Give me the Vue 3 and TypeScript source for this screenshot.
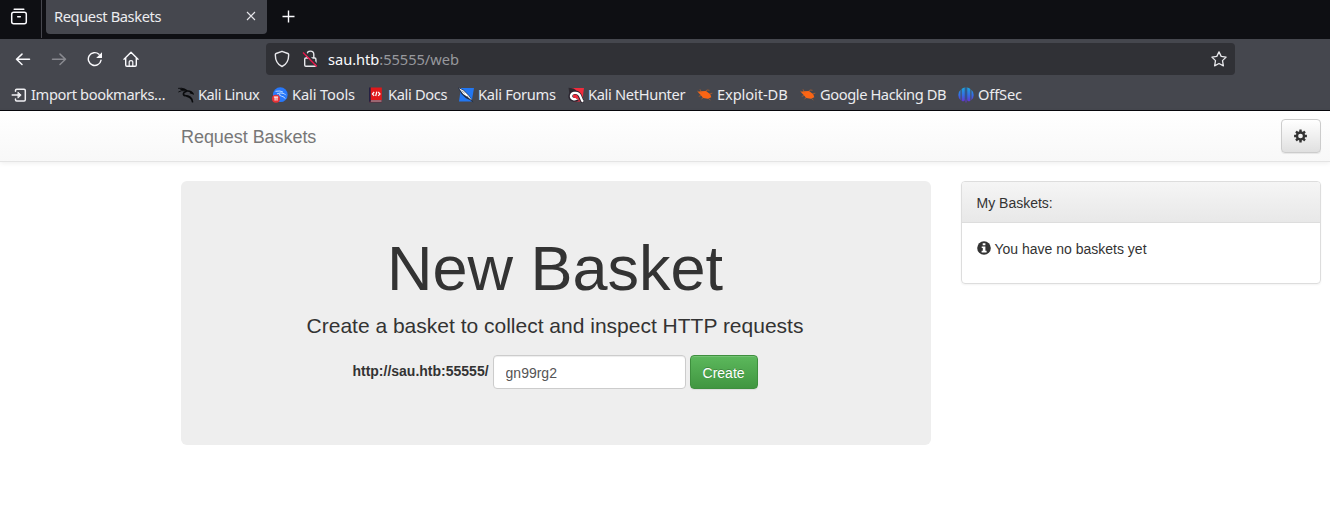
<script setup lang="ts">
import { ref } from 'vue'

interface Bookmark {
  icon: string
  label: string
  tracking: number
}

const bookmarks: Bookmark[] = [
  { icon: 'import', label: 'Import bookmarks…', tracking: -0.38 },
  { icon: 'kali', label: 'Kali Linux', tracking: -0.46 },
  { icon: 'tools', label: 'Kali Tools', tracking: -0.14 },
  { icon: 'docs', label: 'Kali Docs', tracking: -0.35 },
  { icon: 'forums', label: 'Kali Forums', tracking: -0.3 },
  { icon: 'nethunter', label: 'Kali NetHunter', tracking: -0.34 },
  { icon: 'bug', label: 'Exploit-DB', tracking: -0.1 },
  { icon: 'bug', label: 'Google Hacking DB', tracking: -0.41 },
  { icon: 'offsec', label: 'OffSec', tracking: -0.15 },
]

const basketName = ref<string>('gn99rg2')
const teeth: number[] = [0, 45, 90, 135, 180, 225, 270, 315]
</script>

<template>
  <div class="window">
    <div class="tabstrip">
      <div class="view">
        <svg width="18" height="18" viewBox="0 0 18 18" fill="none" stroke="#fbfbfe" stroke-width="1.5" stroke-linecap="round">
          <path d="M4.200 1.200h9.600" />
          <rect x="1.700" y="4.200" width="14.600" height="11.600" rx="2" />
          <path d="M7.700 8.800h2.600" />
        </svg>
      </div>
      <div class="tab">
        <span class="tab-title">Request Baskets</span>
        <svg class="close" width="10" height="10" viewBox="0 0 10 10" stroke="#e6e6ea" stroke-width="1.1"><path d="M1 1l8 8M9 1L1 9" /></svg>
      </div>
      <svg class="plus" width="14" height="14" viewBox="0 0 14 14" stroke="#fbfbfe" stroke-width="1.4"><path d="M6.500 .5v12M.5 6.500h12" /></svg>
    </div>

    <div class="toolbar">
      <div class="nav-buttons">
        <svg width="16" height="16" viewBox="0 0 16 16" fill="none" stroke="#fbfbfe" stroke-width="1.5" stroke-linecap="round" stroke-linejoin="round"><path d="M14.500 8.300H1.500M7 3.100L1.500 8.300 7 13.500" /></svg>
        <svg width="16" height="16" viewBox="0 0 16 16" fill="none" stroke="#898a90" stroke-width="1.500" stroke-linecap="round" stroke-linejoin="round"><path d="M1.500 8.300h13M9 3.100l5.500 5.200L9 13.500" /></svg>
        <svg width="16" height="16" viewBox="0 0 16 16" fill="none" stroke="#fbfbfe" stroke-width="1.400" stroke-linecap="round"><path d="M14 9.300A6.400 6.400 0 1 1 12 3.300" /><path d="M15 1.200v5.300q0 .5-.5.500H9.200z" fill="#fbfbfe" stroke="none" /></svg>
        <svg class="home" width="16" height="16" viewBox="0 0 16 16" fill="none" stroke="#fbfbfe" stroke-width="1.400" stroke-linejoin="round" stroke-linecap="round"><path d="M1 8.200l7-6.900 7 6.900M2.700 6.800v7.300q0 1.200 1.200 1.200h8.200q1.200 0 1.200-1.200V6.800" /><path d="M6.200 15v-4.200q0-1.100 1.800-1.100t1.800 1.100V15" stroke-width="1.200" /></svg>
      </div>
      <div class="urlbar">
        <svg class="shield" width="16" height="18" viewBox="0 0 16 18" fill="none" stroke="#e8e8ec" stroke-width="1.400" stroke-linejoin="round"><path d="M8 1.300l5.900 2.200q.8.300.8 1.200c0 5.600-2.200 9.700-6.700 11.800C3.500 14.400 1.300 10.300 1.300 4.700q0-.9.8-1.200z" /></svg>
        <svg class="lock" width="16" height="18" viewBox="0 0 16 18" fill="none" stroke="#e8e8ec" stroke-width="1.400"><path d="M5 8V4.500a3.400 3.400 0 0 1 6.800 0V8" /><rect x="2.700" y="8" width="11.200" height="8.200" rx="1.200" /><path d="M2.200 1.500l13.800 14" stroke="#303136" stroke-width="1.800" /><path d="M1 2.500l13.800 14" stroke="#e8164a" stroke-width="1.400" /></svg>
        <span class="url">sau.htb<span class="dim">:55555/web</span></span>
        <svg class="star" width="16" height="16" viewBox="0 0 16 16" fill="none" stroke="#e8e8ec" stroke-width="1.300" stroke-linejoin="round"><path d="M8 .9l2.200 4.500 4.900.7-3.600 3.500.9 5.200L8 12.500l-4.400 2.300.9-5.200L.9 6.100l4.900-.7z" /></svg>
      </div>
    </div>

    <div class="bookmarks">
      <div v-for="b in bookmarks" :key="b.label" class="bookmark">
        <svg width="16" height="16" viewBox="0 0 16 16">
          <g v-if="b.icon === 'import'" fill="none" stroke="#f0f0f3" stroke-width="1.500" stroke-linecap="round" stroke-linejoin="round">
            <path d="M4.500 4.300V3.500q0-1.200 1.200-1.200h7.400q1.200 0 1.200 1.200v9.200q0 1.200-1.200 1.200H5.700q-1.200 0-1.200-1.200v-.8M1.200 8.100H9" />
            <path d="M7.200 5.300l3 2.800-3 2.800z" fill="#f0f0f3" stroke-width=".8" />
          </g>
          <g v-else-if="b.icon === 'kali'" fill="none" stroke="#090a0c" stroke-linecap="round">
            <path d="M.5 1.300q3.500-.6 6.500.8M.7 4.800q3-2 6.300-1" stroke-width=".9" />
            <path d="M3 2.300q5 .2 6.200 1.700 4-.3 5.500 2.500l-2.200-.7M8 4.500C4 6 5 8.800 8.500 8.800c4 0 5.200 2.200 6 6" stroke-width="1.600" />
            <path d="M9 9.200q3 .8 4.500 2.800" stroke-width="1.600" />
          </g>
          <g v-else-if="b.icon === 'tools'">
            <circle cx="8.300" cy="7.700" r="7.400" fill="#2878fa" />
            <path d="M3.500 4.300q5-1 7.500.8M5 6.800q3-1.700 7.200-.2l1.500 1.600M8 6.500q-1.800 2 1.500 2.700 3 .5 3.700 2.500" fill="none" stroke="#b9d9ff" stroke-width="1" />
            <circle cx="4" cy="11.700" r="4" fill="#e83235" />
            <path d="M1.900 10h4.200M3.100 10v3.600M5 10v3.600" stroke="#fff" stroke-width="1" />
          </g>
          <g v-else-if="b.icon === 'docs'">
            <path d="M1 .5h2v13L1 15.500z" fill="#252143" />
            <path d="M2.700 .5h11.100v12.500H2.700z" fill="#e0181a" />
            <path d="M1 15.500l2-2.500h10.800v2.500z" fill="#62283b" />
            <path d="M3 14h10.500" stroke="#d7a3a8" stroke-width="1" />
            <path d="M6.200 5L4.400 7l1.800 1.800M10.200 5L12 7l-1.800 1.800M8.800 4.700L7.700 9" fill="none" stroke="#fff" stroke-width="1.200" />
          </g>
          <g v-else-if="b.icon === 'forums'">
            <path d="M3 1h13l-2.300 13.600H1z" fill="#2277f2" />
            <path d="M0 .5l5.500 2.200L11.200 8.500 15.500 15.500 12 13 8 11.200 3.500 7z" fill="#1b2b48" />
            <path d="M1 1.200l4.500 2.200 5 5.100 3.500 5-4-3.200L5.200 7z" fill="#fff" />
            <path d="M3.700 3.700l3 2.500M9 9l1.500 1" fill="none" stroke="#5d6c80" stroke-width=".7" />
          </g>
          <g v-else-if="b.icon === 'nethunter'">
            <path d="M3.500 1H16l-1.800 13.500H6z" fill="#f02b3c" />
            <path d="M.5.700l5 .8 3 2-7 3.700z" fill="#2d2930" />
            <path d="M15.500 15.300C12.800 13.700 13 9.500 11 7.300 8.500 4.400 3 5.200 2.400 8.900c-.4 3.500 4.100 5 7.300 3" fill="none" stroke="#2b2530" stroke-width="4" />
            <path d="M15 14.800C12.500 12 13.200 9 10.700 7 8 4.800 3.500 5.800 3 8.900c-.3 2.700 3.200 4.300 6.300 2.700" fill="none" stroke="#fff" stroke-width="2.300" />
            <path d="M9.300 11.600L6 8.600" stroke="#ef2a3b" stroke-width="1.500" />
          </g>
          <g v-else-if="b.icon === 'bug'" stroke="#d9641f" stroke-width=".6" fill="none">
            <path d="M1 5.200L4 4.300l5-.4 4.300 3.300 1 3.100-3.500 1.400-4.600-.8L3 7.200z" fill="#fb6514" stroke="none" />
            <path d="M.3 4.200l5 1.500M4.300 5L3 2.300M8.500 4.200l1.500-1.200 2.500.3M12.300 7l3-.8M11.300 11l2 2.200M6.500 10l-2 2.300M4 8.500L1.800 9.400" />
          </g>
          <g v-else>
            <defs><linearGradient id="offsecFill" gradientUnits="userSpaceOnUse" x1="0" y1="0" x2="0" y2="16"><stop offset="0" stop-color="#1aa8dc" /><stop offset=".5" stop-color="#346ee5" /><stop offset="1" stop-color="#6a28cf" /></linearGradient></defs>
            <path d="M2.600 2.800v10.400Q.3 11.200.3 8t2.300-5.200zM3.600 2Q5 .9 6.800.6v12.200q0 1-.7 1.400Q4.700 14.500 3.600 13.700zM9.200.6q1.800.3 3.200 1.400v11.700q-1.100.8-2.500.5-.7-.4-.7-1.400zM13.400 2.800Q15.700 4.800 15.700 8t-2.300 5.200zM7.500.5h1v15h-1z" fill="url(#offsecFill)" />
            <path d="M7.500.5h1v12h-1z" fill="#2b4a86" />
          </g>
        </svg>
        <span class="label" :style="{ letterSpacing: `${b.tracking}px` }">{{ b.label }}</span>
      </div>
    </div>

    <header class="navbar">
      <span class="brand">Request Baskets</span>
      <button class="btn gear" type="button">
        <svg width="14" height="14" viewBox="0 0 14 14">
          <g fill="#333"><rect v-for="a in teeth" :key="a" x="5.700" y=".1" width="2.600" height="3.500" rx=".3" :transform="`rotate(${a} 7 7)`" /></g>
          <circle cx="7" cy="7" r="3.800" fill="none" stroke="#333" stroke-width="2.500" />
        </svg>
      </button>
    </header>

    <main class="content">
      <section class="jumbotron">
        <h1>New Basket</h1>
        <p>Create a basket to collect and inspect HTTP requests</p>
        <form class="create" @submit.prevent>
          <label for="basket">http://sau.htb:55555/</label>
          <input id="basket" v-model="basketName" type="text" />
          <button class="btn success" type="submit">Create</button>
        </form>
      </section>
      <aside class="panel">
        <div class="panel-heading">My Baskets:</div>
        <div class="panel-body">
          <svg width="14" height="14" viewBox="0 0 14 14"><circle cx="7" cy="7" r="6.800" fill="#333" /><path d="M5.700 2.300h2.700v2H5.700zM4.700 5.500h3.700v4.300h1.200v1.700H4.600V9.800h1.200V7.100H4.700z" fill="#fff" /></svg>
          <span>You have no baskets yet</span>
        </div>
      </aside>
    </main>
  </div>
</template>

<style>
body { margin: 0; background: #fff; }
</style>

<style scoped>
* { box-sizing: border-box; }
.window { height: 525px; overflow: hidden; background: #fff; font-family: "Liberation Sans", Arial, sans-serif; font-size: 14px; color: #333; }
.tabstrip, .toolbar, .bookmarks { font-family: "Noto Sans", sans-serif; color: #ececef; }
.tabstrip { height: 39px; background: #0e0f13; display: flex; align-items: flex-start; }
.view { width: 42px; height: 38px; padding: 8px 0 0 10px; border-right: 1px solid #46474e; }
.tab { width: 221px; height: 34px; margin-left: 4px; padding: 0 11px 2px 8px; background: #45474e; border-radius: 0 0 4px 4px; display: flex; align-items: center; justify-content: space-between; }
.tab-title { font-size: 14.67px; line-height: 32px; letter-spacing: -.4px; }
.plus { margin: 10px 0 0 15px; }
.toolbar { height: 40px; background: #45474e; display: flex; padding-top: 4px; }
.nav-buttons { width: 266px; padding: 8px 0 0 15px; display: flex; gap: 20px; }
.home { margin-left: -.5px; }
.urlbar { width: 969px; height: 32px; background: #303136; border-radius: 4px; display: flex; align-items: center; padding: 0 8px; }
.lock { margin-left: 12px; }
.url { flex: 1; margin-left: 10px; font-size: 14.67px; line-height: 32px; color: #fbfbfe; letter-spacing: -.05px; }
.dim { color: #97989d; }
.bookmarks { height: 32px; background: #45474e; border-bottom: 1px solid #08080d; display: grid; grid-template-columns: 167px 94px 96px 90px 110px 129px 103px 158px 100px; padding-left: 11px; font-size: 14.67px; }
.bookmark { display: flex; align-items: center; gap: 4px; white-space: nowrap; height: 31px; }
.label { padding-bottom: 2px; }
.navbar { height: 51px; display: flex; align-items: center; justify-content: space-between; padding: 0 9px 0 181px; background: linear-gradient(#fff, #f8f8f8); border-bottom: 1px solid #e4e4e4; box-shadow: 0 1px 5px rgba(0, 0, 0, .075); }
.brand { padding-top: 2px; font-size: 18px; line-height: 20px; letter-spacing: -.05px; color: #777; }
.btn { height: 34px; border-radius: 4px; border: 1px solid #ccc; font: inherit; line-height: 20px; padding: 6px 12px; }
.gear { width: 40px; padding-right: 13px; display: flex; align-items: center; justify-content: center; background: linear-gradient(#fff, #e0e0e0); box-shadow: inset 0 1px 0 rgba(255, 255, 255, .15), 0 1px 1px rgba(0, 0, 0, .075); }
.content { display: flex; gap: 30px; align-items: flex-start; padding: 19px 0 0 181px; }
.jumbotron { width: 750px; height: 264px; background: #eee; border-radius: 6px; padding: 53px 2px 0 0; text-align: center; }
h1 { margin: 0; font-size: 63px; line-height: 69px; font-weight: 400; }
.jumbotron p { margin: 8px 0 14px; font-size: 21px; line-height: 30px; }
.create { display: flex; justify-content: center; gap: 4px; }
.create label { font-weight: 700; line-height: 20px; padding-top: 6px; }
.create input { width: 193px; height: 34px; padding: 7px 12px 5px; border: 1px solid #ccc; border-radius: 4px; font: inherit; color: #555; background: #fff; box-shadow: inset 0 1px 1px rgba(0, 0, 0, .075); }
.success { width: 68px; padding: 7px 12px 5px; color: #fff; border-color: #3e8f3e; background: linear-gradient(#5cb85c, #419641); text-shadow: 0 -1px 0 rgba(0, 0, 0, .2); box-shadow: inset 0 1px 0 rgba(255, 255, 255, .15), 0 1px 1px rgba(0, 0, 0, .075); }
.panel { width: 360px; height: 103px; border: 1px solid #ddd; border-radius: 4px; box-shadow: 0 1px 2px rgba(0, 0, 0, .05); overflow: hidden; }
.panel-heading { height: 41px; padding: 11px 14.5px; line-height: 20px; background: linear-gradient(#f5f5f5, #e8e8e8); border-bottom: 1px solid #ddd; }
.panel-body { padding: 16px 14.5px; line-height: 20px; display: flex; gap: 4px; }
.panel-body svg { margin-top: 2px; }
</style>
